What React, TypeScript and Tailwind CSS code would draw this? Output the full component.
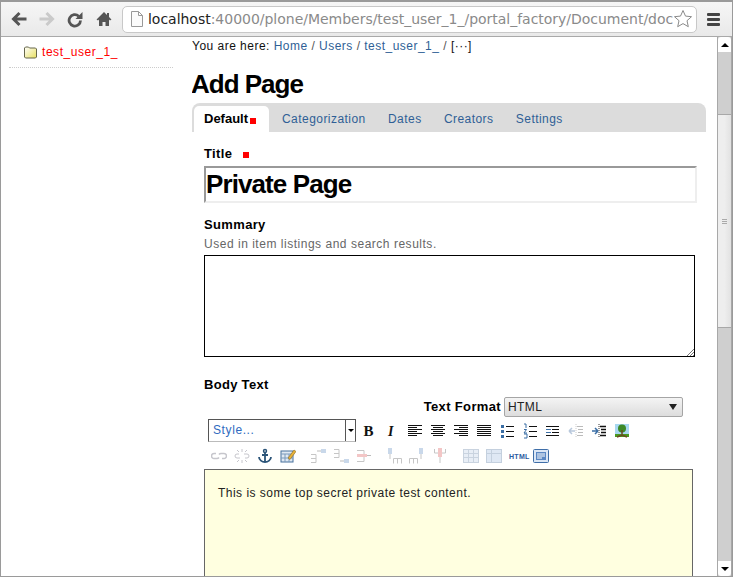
import type { ReactNode } from "react";

const sans = { fontFamily: '"Liberation Sans", Arial, sans-serif' };

function Ico({ w = 16, children }: { w?: number; children: ReactNode }) {
  return (
    <svg width={w} height="16" viewBox={`0 0 ${w} 16`} className="shrink-0" fill="none">
      {children}
    </svg>
  );
}

function Lines({ rows, color = "#111" }: { rows: [number, number][]; color?: string }) {
  return (
    <Ico>
      {rows.map(([x, w], i) => (
        <rect key={i} x={x} y={2 + i * 2} width={w} height="1" fill={color} />
      ))}
    </Ico>
  );
}

function Tab({ children }: { children: ReactNode }) {
  return <span className="text-[#2f5f96] text-[12px] tracking-[0.45px]">{children}</span>;
}

function TopBar() {
  return (
    <div className="flex h-[35px] shrink-0 items-center border-b border-[#a9a9a9] bg-gradient-to-b from-[#f6f6f6] to-[#e9e9e9] pl-[10px] pr-[10px]">
      <svg width="16" height="16" viewBox="0 0 16 16" fill="none" className="mr-[12px]">
        <path d="M8.500 2 2.500 8l6 6M3 8h12.500" stroke="#555" strokeWidth="3" />
      </svg>
      <svg width="16" height="16" viewBox="0 0 16 16" fill="none" className="mr-[12px]">
        <path d="m7.500 2 6 6-6 6M13 8H.5" stroke="#cacaca" strokeWidth="3" />
      </svg>
      <svg width="16" height="17" viewBox="0 0 16 17" fill="none" className="mr-[13px]">
        <path d="M13.500 9.500a5.700 5.700 0 1 1-1.800-4.300" stroke="#555" strokeWidth="2.800" />
        <path d="M15.500 1v7h-7z" fill="#555" />
      </svg>
      <svg width="16" height="16" viewBox="0 0 16 16" className="mr-[10px]">
        <path d="M8 1 0.500 8.500 2 9.500l1-1V15h3.500v-4h3v4H13V8.500l1 1 1.500-1L13 6V2h-2v2z" fill="#555" />
      </svg>
      <div className="flex h-[27px] min-w-0 w-[575px] shrink-0 items-center overflow-hidden rounded-[5px] border border-[#c8c8c8] bg-white pl-[8px] pr-[3px]">
        <svg width="12" height="16" viewBox="0 0 12 16" fill="none" className="mr-[5px] shrink-0">
          <path d="M.5.5h7l4 4v11H.5zM7.500.5v4h4" stroke="#999" fill="#fbfbfb" />
        </svg>
        <span className="flex-1 whitespace-nowrap text-[14px] tracking-[-0.02px] text-[#8a8a8a]" style={{ fontFamily: '"DejaVu Sans", sans-serif' }}>
          <span className="text-[#222]">localhost</span>:40000/plone/Members/test_user_1_/portal_factory/Document/doc
        </span>
        <svg width="20" height="20" viewBox="0 0 20 20" fill="none" className="shrink-0">
          <path d="m10 1.500 2.500 5.600 6 .6-4.500 4 1.300 6L10 14.600l-5.300 3.100 1.300-6-4.500-4 6-.6z" stroke="#8a8a8a" fill="#fff" />
        </svg>
      </div>
      <div className="ml-[10px] flex w-[13px] shrink-0 flex-col gap-[2px]">
        <div className="h-[3px] rounded-[1px] bg-[#444]" />
        <div className="h-[3px] rounded-[1px] bg-[#444]" />
        <div className="h-[3px] rounded-[1px] bg-[#444]" />
      </div>
    </div>
  );
}

function Scrollbar() {
  return (
    <div className="flex w-[15px] shrink-0 flex-col border-x border-[#a8a8a8] bg-[#cfcfcf]">
      <div className="flex h-[15px] shrink-0 items-center justify-center rounded-t-[3px] bg-white">
        <div className="h-0 w-0 border-x-[4px] border-b-[4px] border-x-transparent border-b-black" />
      </div>
      <div className="mt-[62px] flex h-[214px] shrink-0 flex-col items-center justify-center gap-[1px] border-y border-[#a8a8a8] bg-gradient-to-r from-[#eeeeee] via-[#eeeeee] to-[#e2e2e2]">
        <div className="h-px w-[5px] bg-[#aaa]" />
        <div className="h-px w-[5px] bg-[#aaa]" />
        <div className="h-px w-[5px] bg-[#aaa]" />
      </div>
      <div className="flex-1" />
      <div className="flex h-[15px] shrink-0 items-center justify-center rounded-b-[3px] bg-white">
        <div className="h-0 w-0 border-x-[4px] border-t-[4px] border-x-transparent border-t-black" />
      </div>
    </div>
  );
}

function Sidebar() {
  return (
    <div className="w-[191px] shrink-0 pl-[8px]">
      <div className="flex h-[31px] w-[164px] items-start border-b border-dotted border-[#ccc] pl-[14px] pt-[8px]">
        <svg width="15" height="13" viewBox="0 0 15 13" className="mr-[4px] mt-[1px]">
          <defs>
            <linearGradient id="fold" x1="0" y1="0" x2="1" y2="1">
              <stop offset="0" stopColor="#fff" />
              <stop offset="1" stopColor="#e8e060" />
            </linearGradient>
          </defs>
          <path d="M1.500 3V2l1-1h3l1 1h6l1 1v8l-1 1h-10l-1-1z" fill="url(#fold)" stroke="#66664a" />
        </svg>
        <span className="text-[12px] leading-[15px] tracking-[0.55px] text-[#f00]">test_user_1_</span>
      </div>
    </div>
  );
}

function EditorToolbar() {
  return (
    <div className="ml-[4px]">
      <div className="flex h-[24px] items-center">
        <div className="flex h-[23px] w-[148px] shrink-0 border border-b-[#bbb] border-[#555] bg-white">
          <span className="flex-1 pl-[4px] text-[12px] leading-[20px] tracking-[0.6px] text-[#2f6bc0]">Style...</span>
          <div className="flex w-[10px] items-center justify-center border-l border-[#555]">
            <div className="h-0 w-0 border-x-[3px] border-t-[3px] border-x-transparent border-t-black" />
          </div>
        </div>
        <div className="ml-[5px] mt-[1px] flex items-center gap-[7px]">
          <Ico>
            <text x="2.500" y="13" fontSize="15" fontWeight="700" fontFamily="Liberation Serif" fill="#111">B</text>
          </Ico>
          <Ico>
            <text x="4" y="13" fontSize="14" fontWeight="700" fontStyle="italic" fontFamily="Liberation Serif" fill="#111">I</text>
          </Ico>
          <Lines rows={[[1, 14], [1, 9], [1, 14], [1, 9], [1, 14], [1, 9]]} />
          <Lines rows={[[1, 14], [3, 10], [1, 14], [3, 10], [1, 14], [3, 10]]} />
          <Lines rows={[[1, 14], [6, 9], [1, 14], [6, 9], [1, 14], [6, 9]]} />
          <Lines rows={[[1, 14], [1, 14], [1, 14], [1, 14], [1, 14], [1, 14]]} />
          <Ico>
            <rect x="2" y="2" width="3" height="3" fill="#3a6ea5" />
            <rect x="2" y="7" width="3" height="3" fill="#3a6ea5" />
            <rect x="2" y="12" width="3" height="3" fill="#3a6ea5" />
            <path d="M7 3.500h8M7 8.500h8M7 13.500h8" stroke="#111" />
          </Ico>
          <Ico>
            <path d="M2 1h2v4M2 6.500h2.500L2 10h3M2 11h3v4H2" stroke="#3a6ea5" />
            <path d="M7 3.500h8M7 8.500h8M7 13.500h8" stroke="#111" />
          </Ico>
          <Ico>
            <path d="M1 3.500h13M7 6.500h7M7 9.500h7M1 12.500h13" stroke="#111" />
            <path d="M1 6.500h5M1 9.500h5" stroke="#3a6ea5" />
          </Ico>
          <Ico>
            <path d="M8 1v14" stroke="#ccc" strokeDasharray="1 1" />
            <path d="M9 3.500h6M10 6.500h5M10 9.500h5M9 12.500h6" stroke="#bbb" />
            <path d="M1 8h6M1 8l3-3M1 8l3 3" stroke="#b8c8dc" strokeWidth="1.500" />
          </Ico>
          <Ico>
            <path d="M8 1v14" stroke="#333" strokeDasharray="1 1" />
            <path d="M9 3.500h6M10 6.500h5M10 9.500h5M9 12.500h6" stroke="#111" strokeWidth="1.300" />
            <path d="M1 8h6M7 8 4 5M7 8l-3 3" stroke="#3a6ea5" strokeWidth="1.500" />
          </Ico>
          <Ico>
            <rect x="1" y="1" width="14" height="13" fill="#a8d8f0" />
            <path d="M1 11h14v3H1z" fill="#4a9a20" />
            <circle cx="8" cy="5.500" r="4" fill="#3d8a28" />
            <path d="M8 7v6M3 14l5-2 5 2" stroke="#6a4a20" strokeWidth="1.500" />
          </Ico>
        </div>
      </div>
      <div className="ml-[3px] mt-[2px] flex h-[24px] items-center">
        <div className="flex items-center gap-[7px]">
          <Ico>
            <path d="M5 5.500H3a2.500 2.500 0 0 0 0 5h3a2.500 2.500 0 0 0 2-1M11 10.500h2a2.500 2.500 0 0 0 0-5h-3a2.500 2.500 0 0 0-2 1" stroke="#c6c6cc" strokeWidth="1.500" />
          </Ico>
          <Ico>
            <path d="M5 6H3a2 2 0 0 0 0 4h3M11 10h2a2 2 0 0 0 0-4h-3M8 1v3M8 12v3M3 2l2 2M13 2l-2 2M3 14l2-2M13 14l-2-2" stroke="#c6c6cc" />
          </Ico>
          <Ico>
            <circle cx="8" cy="3" r="1.500" stroke="#2b5478" strokeWidth="1.500" />
            <path d="M8 4v10M5 7h6M2 9c0 3 3 5 6 5s6-2 6-5" stroke="#2b5478" strokeWidth="1.800" />
          </Ico>
          <Ico>
            <rect x="1" y="3" width="12" height="11" fill="#dfe8f2" stroke="#46709c" />
            <path d="M1 6h12M5 6v8M9 6v8M1 10h12" stroke="#7b9abb" />
            <path d="m8 10 6-8 2 1.500-6 8z" fill="#e8b23a" stroke="#8a6a20" strokeWidth=".6" />
          </Ico>
          <div className="w-0" />
          <Ico>
            <path d="M1 6.500h5v8H1M1 10.500h5" stroke="#c6c6c6" />
            <rect x="11" y="1" width="5" height="4" fill="#c9d8ea" />
            <path d="M7 3h4" stroke="#bbb" />
          </Ico>
          <Ico>
            <path d="M1 1.500h5v8H1M1 5.500h5" stroke="#c6c6c6" />
            <rect x="11" y="11" width="5" height="4" fill="#c9d8ea" />
            <path d="M7 13h4" stroke="#bbb" />
          </Ico>
          <Ico>
            <path d="M1 2.500h7v11H1" stroke="#c6c6c6" />
            <rect x="1" y="6" width="10" height="3" fill="#f3c6c6" />
            <path d="M11 7.500h4" stroke="#bbb" />
          </Ico>
          <div className="w-0" />
          <Ico>
            <rect x="2" y="0" width="4" height="6" fill="#c9d8ea" />
            <path d="M4 6v5M7.500 10.500h8v5M11.500 10.500v5M7.500 10.500v5" stroke="#c6c6c6" />
          </Ico>
          <Ico>
            <rect x="10" y="0" width="4" height="6" fill="#c9d8ea" />
            <path d="M12 6v5M.5 10.500h8v5M4.500 10.500v5M.5 10.500v5" stroke="#c6c6c6" />
          </Ico>
          <Ico>
            <path d="M2.500 1v4h11V1M8 1v14" stroke="#c6c6c6" />
            <rect x="6" y="0" width="4" height="9" fill="#f3c6c6" />
          </Ico>
          <div className="w-px" />
          <Ico>
            <rect x=".5" y="1.500" width="15" height="13" fill="#e8eef6" stroke="#c9d3df" />
            <path d="M.5 5.500h15M.5 9.500h15M5.500 1.500v13M10.500 1.500v13" stroke="#c9d3df" />
          </Ico>
          <Ico>
            <rect x=".5" y="1.500" width="15" height="13" fill="#dfe8f4" stroke="#c4d0de" />
            <path d="M.5 5.500h15M5.500 1.500v13" stroke="#c4d0de" />
          </Ico>
          <span className="w-[17px] text-[7px] font-bold leading-none tracking-[0.3px] text-[#2b5aa0]">HTML</span>
          <Ico>
            <rect x=".5" y="1.500" width="15" height="13" rx="1" fill="#dbe7f6" stroke="#3f6ea8" />
            <rect x="3" y="4" width="10" height="8" fill="#5b88c4" />
            <path d="M4 6h8M4 8h8M4 10h5" stroke="#fff" />
          </Ico>
        </div>
      </div>
    </div>
  );
}

function Content() {
  return (
    <div className="w-[514px] shrink-0 overflow-hidden text-[12px] text-black">
      <div className="pt-[2px] leading-[14px] tracking-[0.48px] whitespace-nowrap text-[#111]">
        You are here: <span className="text-[#2f5f96]">Home</span>
        <span className="text-[#555]"> / </span>
        <span className="text-[#2f5f96]">Users</span>
        <span className="text-[#555]"> / </span>
        <span className="text-[#2f5f96]">test_user_1_</span>
        <span className="text-[#555]"> / </span>[···]
      </div>
      <h1 className="-ml-px mt-[16px] text-[26px] font-bold leading-[30px] tracking-[-1px]">Add Page</h1>
      <div className="mt-[4px] flex h-[29px] items-end rounded-t-[8px] bg-[#dcdcdc] pl-[2px]">
        <div className="flex h-[26px] w-[75px] items-center rounded-t-[5px] bg-white pl-[10px]">
          <span className="text-[13px] font-bold">Default</span>
          <span className="ml-[2px] mt-[3px] h-[6px] w-[6px] bg-[#f00]" />
        </div>
        <div className="flex h-[26px] items-center gap-[22.300px] pl-[13px]">
          <Tab>Categorization</Tab>
          <Tab>Dates</Tab>
          <Tab>Creators</Tab>
          <Tab>Settings</Tab>
        </div>
      </div>
      <div className="pl-[12px]">
        <div className="mt-[15px] flex h-[14px] items-center text-[13px] font-bold leading-[14px] tracking-[0.35px]">
          Title
          <span className="ml-[11px] mt-[2px] h-[6px] w-[6px] bg-[#f00]" />
        </div>
        <div className="mt-[5px] flex h-[37px] w-[493px] items-center border-2 border-[#eeeeee] border-l-[#999] border-t-[#999] text-[26px] font-bold tracking-[-0.9px]">
          Private Page
        </div>
        <div className="mt-[15px] text-[13px] font-bold leading-[14px] tracking-[0.35px]">Summary</div>
        <div className="mt-[5px] leading-[14px] tracking-[0.52px] text-[#666]">Used in item listings and search results.</div>
        <div className="relative mt-[4px] h-[102px] w-[491px] border border-black bg-white">
          <svg width="8" height="8" viewBox="0 0 8 8" className="absolute bottom-0 right-0">
            <path d="M1 8 8 1M4 8l4-4M7 8l1-1" stroke="#777" />
          </svg>
        </div>
        <div className="mt-[21px] text-[13px] font-bold leading-[14px] tracking-[0.3px]">Body Text</div>
        <div className="mt-[5px] flex h-[20px] w-[479px] items-center justify-end">
          <span className="mr-[3px] text-[13px] font-bold tracking-[0.35px]">Text Format</span>
          <div className="flex h-[20px] w-[179px] items-center justify-between rounded-[2px] border border-[#a5a5a5] bg-gradient-to-b from-[#f4f4f4] to-[#dddddd] pl-[3px] pr-[5px]">
            <span className="text-[12px] tracking-[0.4px] text-[#222]">HTML</span>
            <div className="h-0 w-0 border-x-[4px] border-t-[6px] border-x-transparent border-t-[#222]" />
          </div>
        </div>
        <div className="mt-[1px]">
          <EditorToolbar />
        </div>
        <div className="mt-[1px] h-[120px] w-[489px] border border-[#666] bg-[#ffffe0] pl-[13px] pt-[16px] leading-[14px] tracking-[0.48px] text-[#222]">
          This is some top secret private test content.
        </div>
      </div>
    </div>
  );
}

export default function App() {
  return (
    <div className="flex h-[577px] w-[733px] flex-col overflow-hidden border border-t-2 border-[#9a9a9a] bg-white" style={sans}>
      <TopBar />
      <div className="flex min-h-0 flex-1">
        <Sidebar />
        <Content />
        <div className="flex-1" />
        <Scrollbar />
      </div>
    </div>
  );
}
